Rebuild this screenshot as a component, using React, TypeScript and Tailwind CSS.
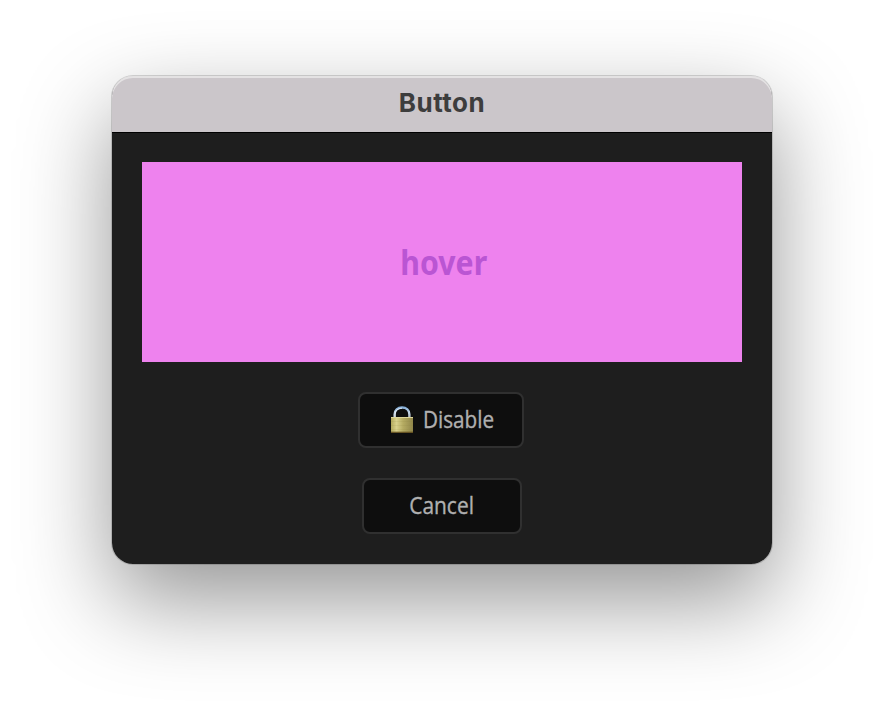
function PadlockIcon() {
  return (
    <svg width="24" height="28" viewBox="0 0 24 28" aria-hidden="true">
      <defs>
        <linearGradient id="brass" x1="0" x2="1" y1="0" y2="0">
          <stop offset="0" stopColor="#b3a95d" />
          <stop offset=".25" stopColor="#d9d18c" />
          <stop offset=".55" stopColor="#b5ab62" />
          <stop offset="1" stopColor="#90864a" />
        </linearGradient>
        <linearGradient id="steel" x1="0" x2="0" y1="0" y2="1">
          <stop offset="0" stopColor="#86afd8" />
          <stop offset=".4" stopColor="#c3d5e8" />
          <stop offset="1" stopColor="#a9b2b8" />
        </linearGradient>
      </defs>
      <path d="M4.6 13V8.500C4.600 4 7.700 1.500 12 1.500s7.400 2.500 7.400 7V13" fill="none" stroke="url(#steel)" strokeWidth="2.400" />
      <path d="M5 12V8.500C5 4.700 8.200 2.200 12 2.200" fill="none" stroke="#eff5fb" strokeWidth=".8" />
      <rect x="1" y="11" width="22" height="16" rx=".6" fill="url(#brass)" />
      <path d="M1 11.500h22" stroke="#ddd69a" strokeWidth="1" />
      <path d="M1 15.500h22M1 19.500h22M1 23.500h22" stroke="#877e3e" strokeOpacity=".15" strokeWidth=".8" />
      <path d="M1 26.300h22" stroke="#5f4b1d" strokeWidth="1.200" />
    </svg>
  );
}

const buttonClass =
  "flex h-14 items-center justify-center rounded-lg border-2 border-[#303030] bg-[#0e0e0e] pb-[2px] font-['Open_Sans','Noto_Sans',sans-serif] text-[23px] font-medium leading-none text-[#b0b0b0] [-webkit-text-stroke:0.35px_#b0b0b0]";

export default function App() {
  return (
    <main className="flex h-[712px] w-[884px] justify-center overflow-hidden bg-white pt-[76px] font-['Noto_Sans',sans-serif]">
      <section className="flex h-[488px] w-[660px] flex-col rounded-[21px] shadow-[0_0_0_1px_rgba(0,0,0,0.15),0_36px_92px_rgba(0,0,0,0.42)]">
        <header className="flex h-[57px] shrink-0 items-center justify-center rounded-t-[21px] bg-[#cbc6ca] pb-[3px] shadow-[inset_0_-1px_0_#000,inset_0_2px_0_#e4e2e3]">
          <h1 className="font-['Inter',sans-serif] text-[26px] leading-none font-bold tracking-[0.5px] text-[#3d3d3d]">Button</h1>
        </header>
        <div className="flex flex-1 flex-col items-center rounded-b-[21px] bg-[#1e1e1e] px-[30px] pt-[29px]">
          <div className="flex h-[200px] w-full items-center justify-center bg-[#ee82ee] text-[34px] font-bold text-[#ba55d3]">
            <span className="ml-1 scale-x-[0.89]">hover</span>
          </div>
          <button className={`${buttonClass} mt-[30px] mr-[2px] w-[166px]`}>
            <span className="mt-[2px] ml-[3px] mr-[5px]"><PadlockIcon /></span>
            <span className="-mr-[4px] scale-x-[0.9]">Disable</span>
          </button>
          <button className={`${buttonClass} mt-[30px] w-[160px]`}>
            <span className="scale-x-[0.91]">Cancel</span>
          </button>
        </div>
      </section>
    </main>
  );
}
